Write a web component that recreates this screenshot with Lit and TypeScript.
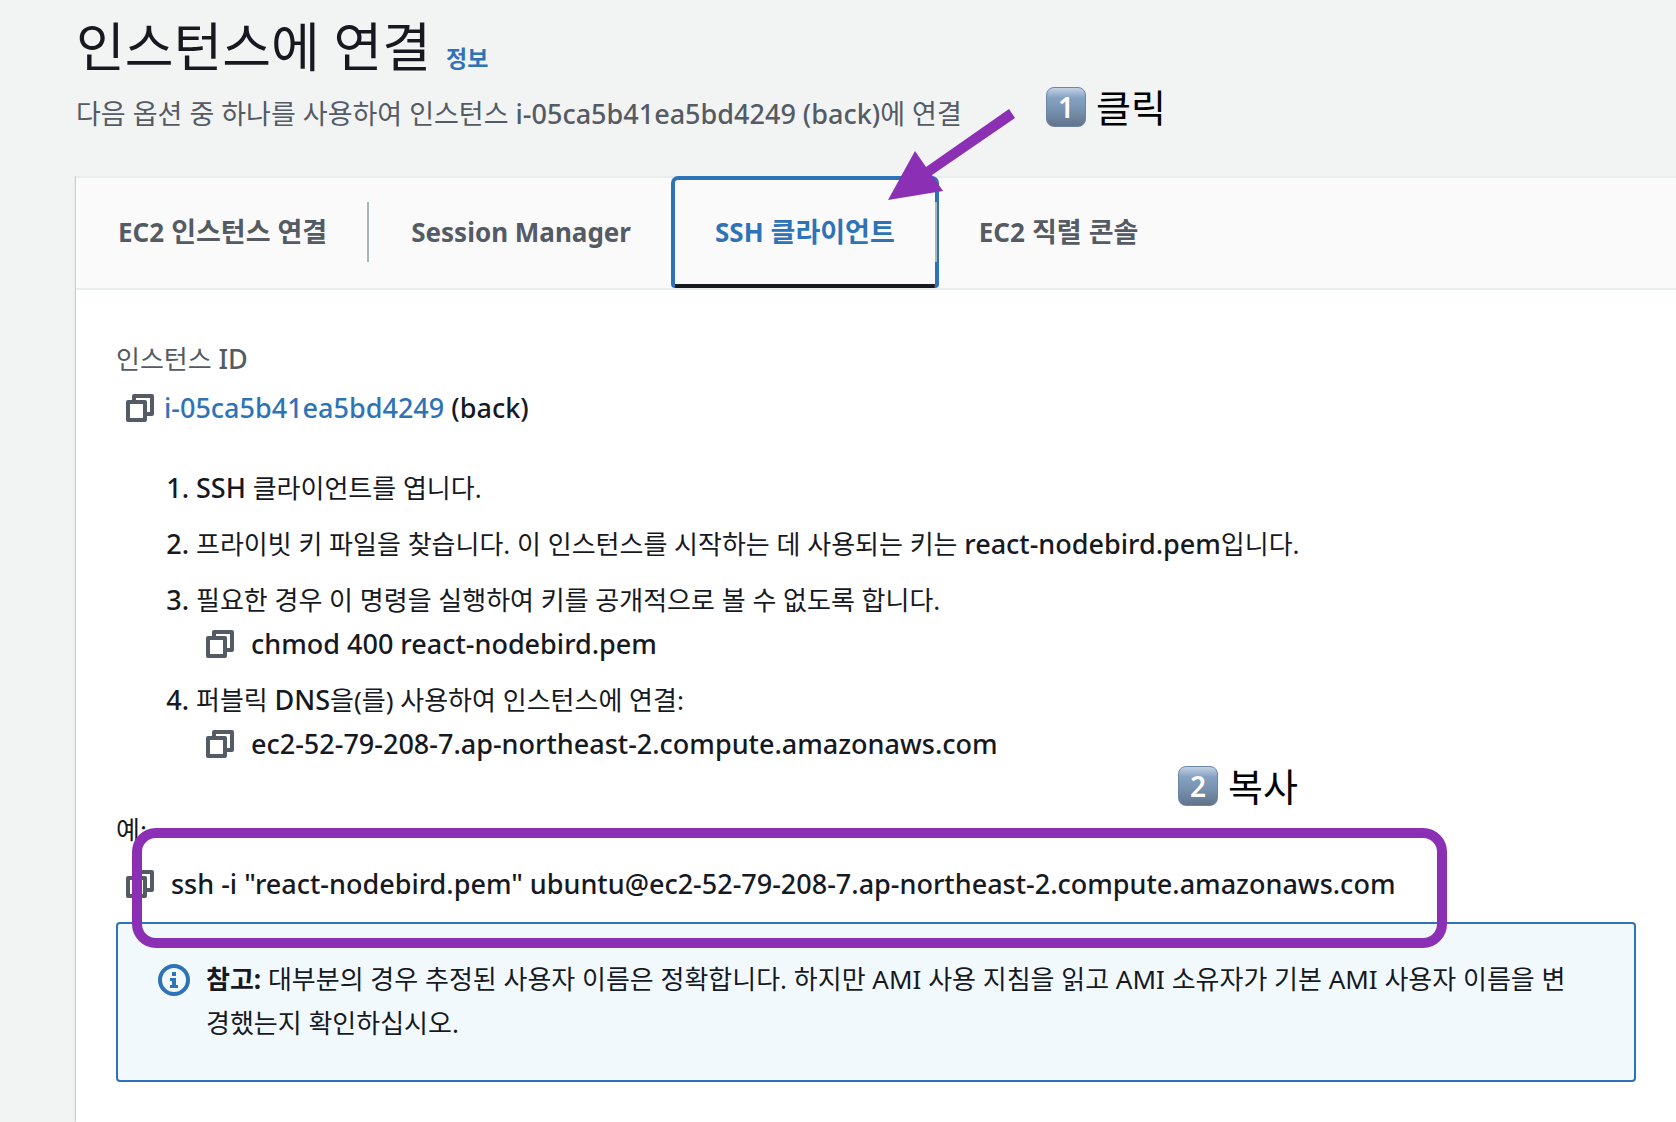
import { LitElement, html, css } from "lit";
import { customElement, property, state } from "lit/decorators.js";
import { classMap } from "lit/directives/class-map.js";

@customElement("copy-button")
class CopyButton extends LitElement {
  @property() value = "";

  static styles = css`
    :host {
      display: inline-flex;
      flex: none;
    }
    .copy {
      display: flex;
      padding: 0;
      border: 0;
      background: none;
      color: #545b64;
      cursor: pointer;
    }
    .icon {
      display: block;
      width: 28px;
      height: 28px;
    }
  `;

  private copy() {
    navigator.clipboard?.writeText(this.value);
  }

  render() {
    return html`<button class="copy" aria-label="복사" @click=${this.copy}>
      <svg class="icon" viewBox="0 0 28 28" fill="none" stroke="currentColor" stroke-width="4" stroke-linejoin="round">
        <path d="M2 8h17v18H2z" />
        <path d="M8 8V2h18v18h-7" />
      </svg>
    </button>`;
  }
}

@customElement("step-note")
class StepNote extends LitElement {
  @property() number = "";
  @property() label = "";

  static styles = css`
    :host {
      display: flex;
      align-items: center;
      gap: 10px;
      color: #000;
      font-size: 38px;
      font-weight: 400;
      line-height: 38px;
    }
    .key {
      box-sizing: border-box;
      width: 40px;
      height: 40px;
      border: 1px solid #6c87a5;
      border-radius: 8px;
      background: linear-gradient(#c3d2e2, #85a1c2 26%, #7b96b4 50%, #62748c);
      color: #fff;
      font: 600 28px/38px "Noto Sans", sans-serif;
      text-align: center;
    }
  `;

  render() {
    return html`<span class="key">${this.number}</span><span>${this.label}</span>`;
  }
}

const TABS = ["EC2 인스턴스 연결", "Session Manager", "SSH 클라이언트", "EC2 직렬 콘솔"];
const INSTANCE = "i-05ca5b41ea5bd4249";
const HOST = "ec2-52-79-208-7.ap-northeast-2.compute.amazonaws.com";
const CHMOD = "chmod 400 react-nodebird.pem";
const SSH = `ssh -i "react-nodebird.pem" ubuntu@${HOST}`;

/** Wraps the Latin runs of a Korean sentence so that they take their own size and weight. */
const mixed = (text: string) =>
  text
    .split(/([A-Za-z0-9][\x21-\x7e]*(?: [\x21-\x7e]+)*)/)
    .map((part, i) => (i % 2 ? html`<span class="latin">${part}</span>` : part));

@customElement("app-root")
class AppRoot extends LitElement {
  @state() private selected = 2;

  static styles = css`
    :host {
      display: flex;
      flex-direction: column;
      position: relative;
      box-sizing: border-box;
      min-height: 100vh;
      overflow: hidden;
      background: #f2f3f3;
      color: #16191f;
      font-family: "Noto Sans", "Noto Sans CJK KR", sans-serif;
      font-size: 26px;
      line-height: 44px;
    }
    .latin {
      font-size: 27px;
      font-weight: 500;
      line-height: 1;
    }
    .header {
      padding: 15px 0 44px 76px;
    }
    .heading {
      display: flex;
      align-items: baseline;
      gap: 15px;
    }
    h1 {
      margin: 0;
      font-size: 53px;
      font-weight: 400;
      line-height: 64px;
    }
    a {
      color: #2e73b8;
      text-decoration: none;
    }
    .info-link {
      font-size: 23px;
      font-weight: 700;
      line-height: 32px;
    }
    .subtitle {
      margin: 17px 0 0;
      color: #545b64;
      font-size: 27px;
      line-height: 36px;
    }
    .panel {
      flex: 1;
      margin-left: 76px;
      background: #fff;
      box-shadow: 0 0 2px #7d8588;
      clip-path: inset(0 0 0 -4px);
    }
    .tabs {
      display: flex;
      height: 110px;
      border-top: 2px solid #eaeded;
      border-bottom: 2px solid #eaeded;
      background: #fafafa;
    }
    .tab {
      position: relative;
      padding: 0 42px 2px;
      border: 0;
      background: none;
      color: #545b64;
      font: inherit;
      font-size: 27px;
      font-weight: 700;
      cursor: pointer;
    }
    .tab .latin {
      font-size: 26px;
      font-weight: 700;
    }
    .tab:not(:last-child)::after {
      content: "";
      position: absolute;
      top: 24px;
      right: 0;
      width: 2px;
      height: 60px;
      background: #aab7b8;
    }
    .tab.before::after {
      display: none;
    }
    .tab.selected {
      color: #2e73b8;
    }
    .tab.selected::before {
      content: "";
      position: absolute;
      inset: -2px -2px 0;
      border: 4px solid #2e73b8;
      border-bottom: 0;
      border-radius: 7px 7px 4px 4px;
      background: linear-gradient(#16191f, #16191f) bottom / 100% 4px no-repeat padding-box;
    }
    .content {
      padding: 47px 40px 40px;
    }
    .label {
      color: #545b64;
    }
    .row {
      display: flex;
      align-items: center;
      gap: 17px;
      padding-left: 10px;
      font-size: 27px;
      font-weight: 500;
    }
    .instance {
      gap: 10px;
      margin-top: 5px;
    }
    ol {
      display: grid;
      gap: 12px;
      margin: 36px 0 42px;
      padding-left: 80px;
    }
    li::marker {
      font-size: 27px;
      font-weight: 500;
    }
    .example {
      margin-top: 10px;
    }
    .note {
      display: flex;
      gap: 16px;
      margin-top: 16px;
      padding: 33px 48px 35px 40px;
      border: 2px solid #2e73b8;
      border-radius: 4px;
      background: #f2f9fd;
    }
    .note p {
      margin: 0;
      word-break: break-all;
    }
    .note-icon {
      flex: none;
      width: 32px;
      height: 32px;
      margin-top: 7px;
    }
    .step-one {
      position: absolute;
      left: 1046px;
      top: 87px;
    }
    .step-two {
      position: absolute;
      left: 1178px;
      top: 766px;
    }
    .arrow {
      position: absolute;
      left: 888px;
      top: 108px;
      width: 128px;
      height: 94px;
    }
    .frame {
      position: absolute;
      left: 132px;
      top: 828px;
      width: 1315px;
      height: 120px;
      box-sizing: border-box;
      border: 10px solid #8b30b5;
      border-radius: 24px;
      pointer-events: none;
    }
  `;

  private tab(name: string, i: number) {
    const on = i === this.selected;
    return html`<button
      class=${classMap({ tab: true, selected: on, before: i === this.selected - 1 })}
      role="tab"
      aria-selected=${on}
      @click=${() => (this.selected = i)}
    >${mixed(name)}</button>`;
  }

  render() {
    return html`
      <header class="header">
        <div class="heading">
          <h1>인스턴스에 연결</h1>
          <a class="info-link" href="#info">정보</a>
        </div>
        <p class="subtitle">${mixed(`다음 옵션 중 하나를 사용하여 인스턴스 ${INSTANCE} (back)에 연결`)}</p>
      </header>
      <main class="panel">
        <div class="tabs" role="tablist">${TABS.map((t, i) => this.tab(t, i))}</div>
        <section class="content" role="tabpanel">
          <div class="label">${mixed("인스턴스 ID")}</div>
          <div class="row instance">
            <copy-button .value=${INSTANCE}></copy-button>
            <span><a href="#instance">${INSTANCE}</a> (back)</span>
          </div>
          <ol>
            <li>${mixed("SSH 클라이언트를 엽니다.")}</li>
            <li>${mixed("프라이빗 키 파일을 찾습니다. 이 인스턴스를 시작하는 데 사용되는 키는 react-nodebird.pem입니다.")}</li>
            <li>
              필요한 경우 이 명령을 실행하여 키를 공개적으로 볼 수 없도록 합니다.
              <div class="row"><copy-button .value=${CHMOD}></copy-button>${CHMOD}</div>
            </li>
            <li>
              ${mixed("퍼블릭 DNS을(를) 사용하여 인스턴스에 연결:")}
              <div class="row"><copy-button .value=${HOST}></copy-button>${HOST}</div>
            </li>
          </ol>
          <div>예:</div>
          <div class="row example"><copy-button .value=${SSH}></copy-button>${SSH}</div>
          <div class="note">
            <svg class="note-icon" viewBox="0 0 32 32" aria-hidden="true">
              <circle cx="16" cy="16" r="14" fill="none" stroke="#2e73b8" stroke-width="4" />
              <path fill="#2e73b8" d="M14 8h4v4h-4zM12 14h6v7h2v3h-8v-3h2v-4h-2z" />
            </svg>
            <p><strong>참고:</strong> 대부분의 경우 추정된 사용자 이름은 정확합니다. 하지만 AMI 사용 지침을 읽고 AMI 소유자가 기본 AMI 사용자 이름을 변경했는지 확인하십시오.</p>
          </div>
        </section>
      </main>
      <step-note class="step-one" number="1" label="클릭"></step-note>
      <svg class="arrow" viewBox="0 0 128 94" aria-hidden="true">
        <path fill="#8b30b5" d="M0 92L27 43L38 59L121 1L127 10L44 67L55 83z" />
      </svg>
      <step-note class="step-two" number="2" label="복사"></step-note>
      <div class="frame"></div>
    `;
  }
}
